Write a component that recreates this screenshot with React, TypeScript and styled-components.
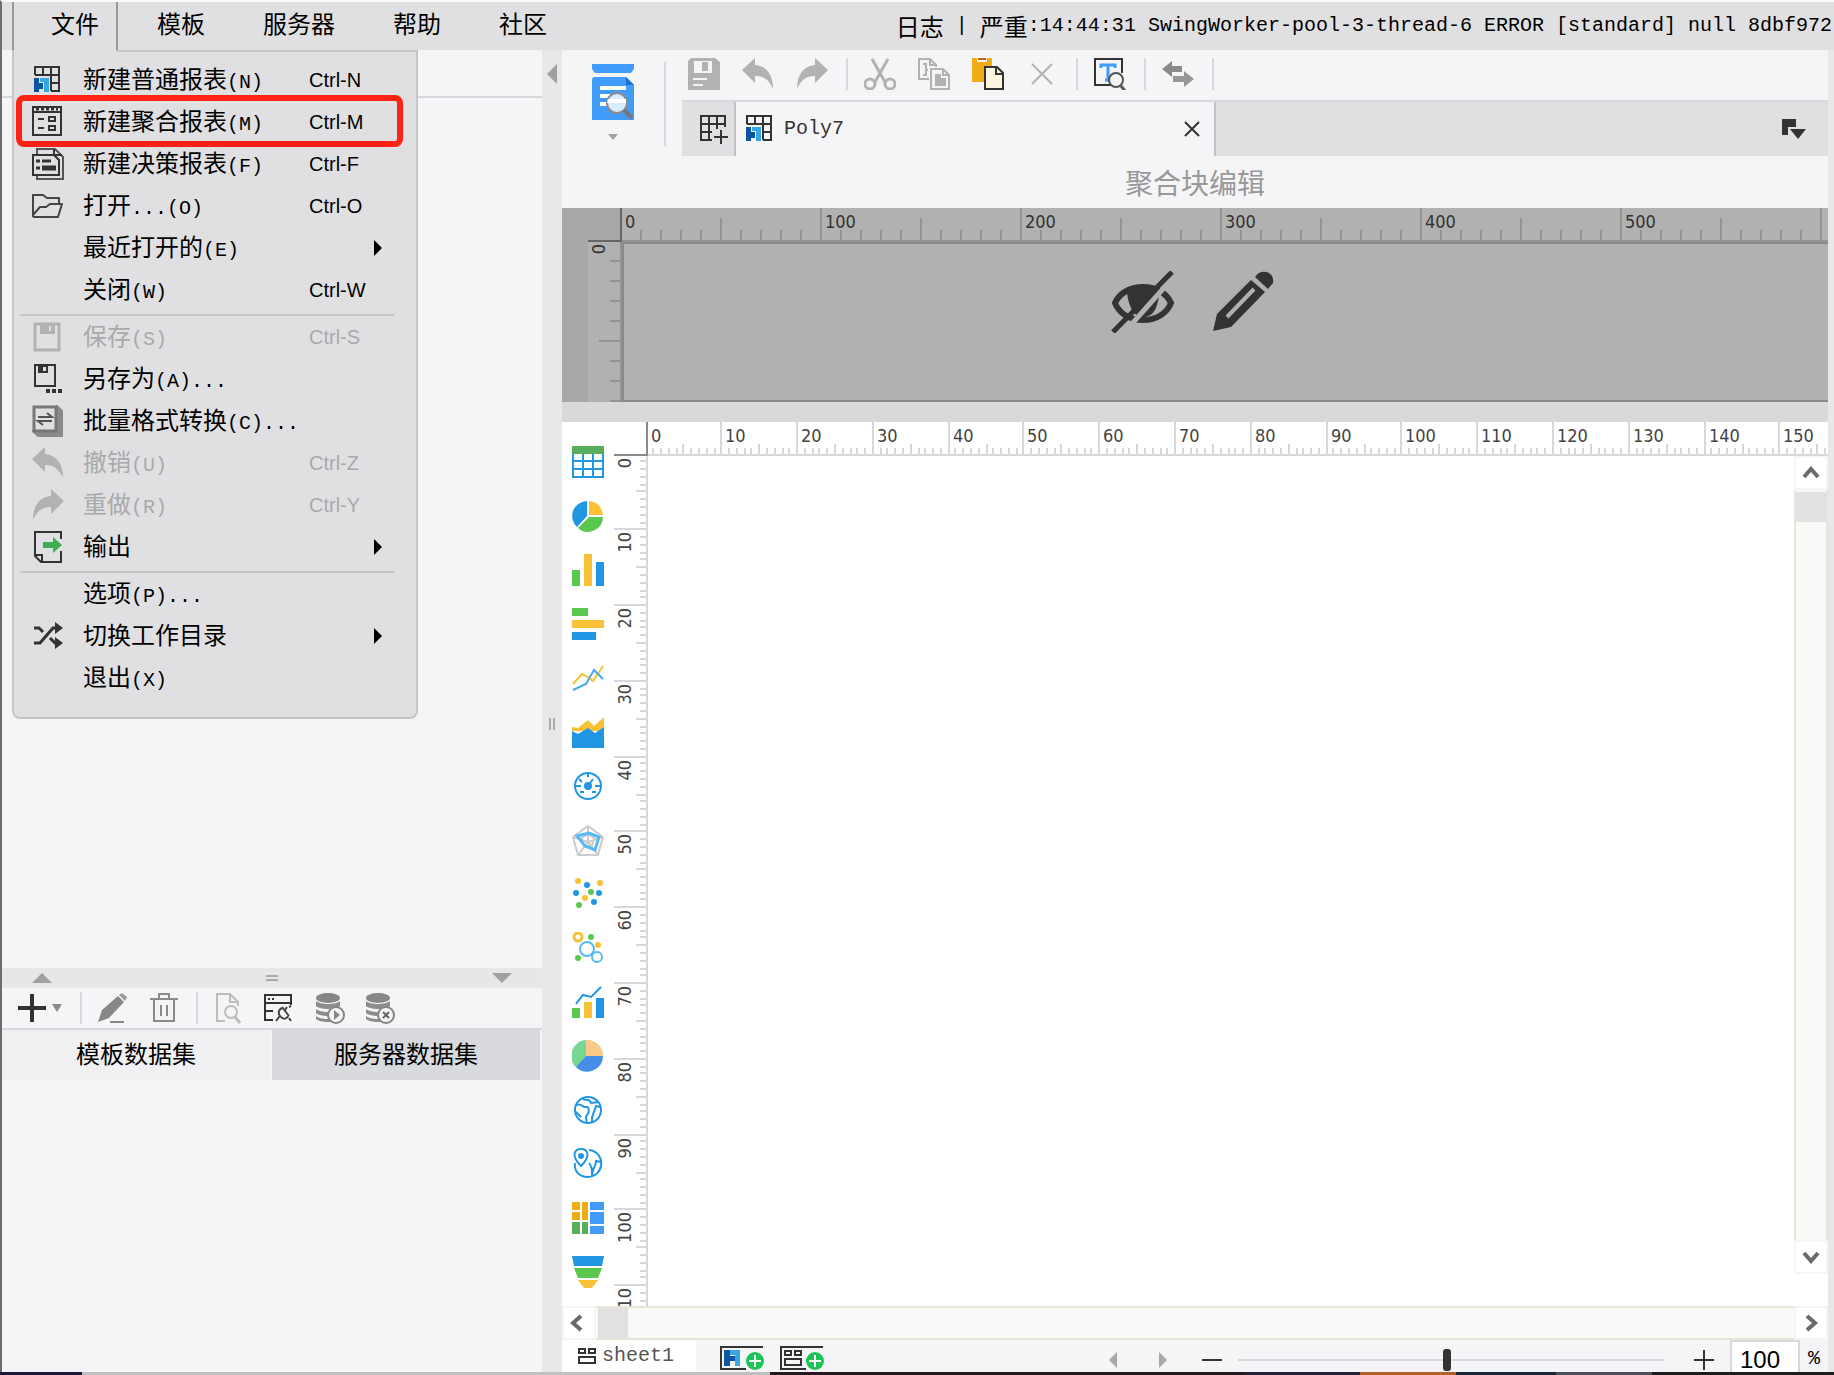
import React, { useLayoutEffect, useRef, useState } from "react";
import styled, { createGlobalStyle, css } from "styled-components";

const ink = "#333333";
const faded = "#b2b2b4";
const blue = "#2196e3";
const sky = "#55b9f5";
const amber = "#f9c136";
const green = "#58c84e";
const surface = "#f5f5f7";
const chrome = "#e0e0e2";
const rule = "#d8d8dc";

const Global = createGlobalStyle`
  *, *::before, *::after { box-sizing: border-box; }
  body { margin: 0; background: ${surface}; }
  button, input { font: inherit; color: inherit; }
  button { border: 0; padding: 0; background: none; text-align: left; }
  svg { display: block; flex: none; }
`;

/* ---------- text ---------- */

const Han = styled.span`
  font-family: "Noto Sans CJK SC", sans-serif;
  font-size: 24px;
`;

function Mixed({ text }: { text: string }) {
  const runs = text.match(/[\u4e00-\u9fff]+|[^\u4e00-\u9fff]+/g) || [];
  return (
    <>
      {runs.map((run, i) =>
        /[\u4e00-\u9fff]/.test(run) ? <Han key={i}>{run}</Han> : <React.Fragment key={i}>{run}</React.Fragment>
      )}
    </>
  );
}

/* ---------- icons ---------- */

type Draw = React.ReactNode;
function Icon({ w = 32, h = 32, children }: { w?: number; h?: number; children: Draw }) {
  return (
    <svg width={w} height={h} viewBox={`0 0 ${w} ${h}`} fill="none" aria-hidden="true">
      {children}
    </svg>
  );
}

const ReportGlyph = (
  <>
    <path d="M3 11V3h24v24h-8M3 11h24M11 3v8M19 3v24M19 19h8" stroke={ink} strokeWidth="2" />
    <path d="M2 14h5v5h4v6H7v3H2z" fill="#0b56a4" />
    <path d="M8 14h9v14h-5V18H8z" fill="#35a8e0" />
  </>
);
const PolyGlyph = (
  <>
    <path d="M1 1h28v28H1zM1 6h28" stroke={ink} strokeWidth="2" />
    <path d="M4 3h22" stroke={ink} strokeWidth="3" strokeDasharray="3 2" />
    <path d="M6 13h6M6 22h6M17 11h6v4h-6zM17 20h6v4h-6z" stroke={ink} strokeWidth="2" />
  </>
);
const FormGlyph = (
  <>
    <path d="M5 6V1h18l8 8v22H5v-3" stroke="#555" strokeWidth="2" />
    <path d="M1 7h21l5 5v15H1z" stroke={ink} strokeWidth="2" />
    <path d="M22 1v6h8" stroke={ink} strokeWidth="2" />
    <path d="M4 13h4M10 13h9M4 20h4" stroke={ink} strokeWidth="3" />
    <path d="M10 20h14" stroke={ink} strokeWidth="5" />
  </>
);
const FolderGlyph = (
  <path d="M1 27V5h10l4 3h12v6M1 27h25l4-13H18l-4 3H8L1 25" stroke="#444" strokeWidth="2" strokeLinejoin="round" />
);
const SaveGlyph = (
  <>
    <path d="M3 3h24v26H3z" stroke={faded} strokeWidth="3" />
    <path d="M8 3h15v10H8z" fill={faded} />
    <path d="M17 5h2v5h-2z" fill={chrome} />
  </>
);
const SaveAsGlyph = (
  <>
    <path d="M3 2h20v21H3z" stroke={ink} strokeWidth="2" />
    <path d="M6 2h10v8H6z" fill={ink} />
    <path d="M11 4h3v4h-3z" fill={chrome} />
    <path d="M14 28h4M20 28h4M26 28h4" stroke={ink} strokeWidth="4" />
  </>
);
const BatchGlyph = (
  <>
    <path d="m1 26 5 5h24V6l-5-5z" fill="#8a8a8c" stroke="#8a8a8c" strokeWidth="2" />
    <path d="M2 2h22v24H2z" stroke="#77777a" strokeWidth="3" fill={chrome} />
    <path d="M6 12h14l-5-4M20 16H6l5 4" stroke="#555" strokeWidth="2" />
  </>
);
const UndoShape = (c: string) => <path d="M0 12 13 0v7c12 1 18 10 18 24C27 22 22 18 13 18v7z" fill={c} />;
const RedoShape = (c: string) => <path d="M32 12 19 0v7C7 8 1 17 1 31c4-9 9-13 18-13v7z" fill={c} />;
const ExportGlyph = (
  <>
    <path d="M29 8V1H3v24l6 6h20V20M3 24h7v7" stroke={ink} strokeWidth="2" />
    <path d="M11 11h10V6l9 8-9 8v-5H11z" fill="#3fae52" />
  </>
);
const ShuffleGlyph = (
  <>
    <path d="M2 8h5l4 4M18 18l5 5h4M2 23h6L21 8h6" stroke={ink} strokeWidth="3" />
    <path d="M23 2l8 6-8 6zM23 17l8 6-8 6z" fill={ink} />
  </>
);

const magnifier = (cx: number, cy: number, r: number, c: string, fill = surface) => (
  <>
    <circle cx={cx} cy={cy} r={r} fill={fill} stroke={c} strokeWidth="2" />
    <path d={`M${cx + r - 2} ${cy + r - 1}l5 6`} stroke={c} strokeWidth="3" />
  </>
);

const EditGlyph = (
  <>
    <path d="M0 30 4 18 20 4l6 6-15 16z" fill="#878787" />
    <path d="m21 3 3-2 5 4-2 4z" fill="#9a9a9a" />
    <path d="M12 30h14" stroke="#878787" strokeWidth="2" />
  </>
);
const TrashGlyph = (
  <path d="M2 7h28M11 6V2h10v4M6 7v22h20V7M13 13v11M19 13v11" stroke="#8a8a8a" strokeWidth="2" />
);
const DocSearchGlyph = (
  <>
    <path d="M11 29H3V2h13l8 8v4M16 2v8h8" stroke="#bdbdbf" strokeWidth="2" />
    {magnifier(17, 20, 6, "#bdbdbf")}
  </>
);
const LinkWindowGlyph = (
  <>
    <path d="M9 28H1V3h26v10M1 11h26M1 19h8" stroke={ink} strokeWidth="2" />
    <path d="M4 7h2M8 7h2" stroke={ink} strokeWidth="2" />
    <path d="m12 29 4-5M16 24c-3-4 0-8 3-8M16 24c3 4 7 3 8 0M18 15l7 9M21 18l2-3M25 26l2 3M25 15l2-1" stroke="#444" strokeWidth="2" />
  </>
);
const Database = ({ cross }: { cross?: boolean }) => (
  <>
    <ellipse cx="14" cy="6" rx="12" ry="5" fill="#878787" />
    <path d="M2 9c4 4 20 4 24 0v5c-4 4-20 4-24 0zM2 17c4 4 20 4 24 0v4c-4 4-20 4-24 0zM2 24c4 4 20 4 24 0v3c-4 4-20 4-24 0z" fill="#8d8d8d" />
    <circle cx="22" cy="23" r="8" fill={surface} stroke="#878787" strokeWidth="2" />
    {cross ? <path d="m19 20 6 6m0-6-6 6" stroke="#666" strokeWidth="2" /> : <path d="m20 18 6 5-6 5z" fill="#878787" />}
  </>
);

const DiskGlyph = (
  <>
    <path d="M3 0h24l5 4v28H0V3z" fill={faded} />
    <path d="M6 3h18v12H6zM5 20h14v2H5zM5 26h10v2H5z" fill={surface} />
    <path d="M14 4h6v9h-6z" fill={faded} />
  </>
);
const CutGlyph = (
  <>
    <path d="M8 1 21 24M24 1 11 24" stroke={faded} strokeWidth="3" />
    <circle cx="6" cy="26" r="5" stroke={faded} strokeWidth="3" />
    <circle cx="26" cy="26" r="5" stroke={faded} strokeWidth="3" />
  </>
);
const CopyGlyph = (
  <>
    <path d="M11 21H1V1h11l6 6M12 1v6h6v2M5 6h3v11H5M8 12h2" stroke={faded} strokeWidth="2" />
    <path d="M13 11h12l6 6v14H13zM25 11v6h6" stroke={faded} strokeWidth="2" />
    <path d="M17 16h6v4h5v8H17z" fill={faded} />
  </>
);
const PasteGlyph = (
  <>
    <path d="M0 0h20v24H0z" fill="#f0ac14" />
    <path d="M5 0h10v4H5z" fill={surface} />
    <path d="M6 0h8v2H6z" fill="#c45f1e" />
    <path d="M13 9h12l6 6v16H13z" fill="#fdf5df" stroke={ink} strokeWidth="2" />
    <path d="M24 9v7h7" stroke={ink} strokeWidth="2" />
  </>
);
const FindTextGlyph = (
  <>
    <path d="M17 27H1V1h27v14" stroke={ink} strokeWidth="2" />
    <path d="M7 10V7h14v3M14 7v15M11 22h6" stroke="#419bf9" strokeWidth="3" />
    {magnifier(22, 22, 7, "#555")}
  </>
);
const SwapGlyph = (
  <>
    <path d="M0 11 10 3v5h10v6H10v5z" fill="#8a8a8a" />
    <path d="M32 21 22 13v5H11v6h11v5z" fill="#979797" />
  </>
);
const PreviewGlyph = (
  <>
    <path d="M0 0h42v5l-3 4H3L0 5z" fill="#419bf9" />
    <path d="M0 16q0-3 3-3h31l8 8v35H0z" fill="#419bf9" />
    <path d="M34 13v8h8z" fill="#1d6fc9" />
    <path d="M8 22h26v4H8zM8 30h10v4H8zM8 38h8v4H8z" fill="#fff" />
    <circle cx="25" cy="39" r="10" fill="#d9ebfe" stroke="#8c8c8c" strokeWidth="2" />
    <path d="M16 35h18v4H15z" fill="#fff" />
    <path d="m32 46 8 8" stroke="#777" strokeWidth="4" />
  </>
);
const AddTabGlyph = <path d="M26 14V3H2v24h11M2 11h24M2 19h11M10 3v24M18 3v13M22 17v14M15 24h14" stroke={ink} strokeWidth="2" />;

const EyeOffGlyph = (
  <>
    <path d="M4 32C8 23 18 16 32 16s24 7 28 16c-4 10-14 17-28 17S8 42 4 32z" stroke={ink} strokeWidth="6" />
    <path d="M16 22c10-7 24-7 33 0l-3 12c-3 10-9 12-14 12-8 0-14-8-16-24z" fill={ink} />
    <path d="M67 1 11 64" stroke="#b1b1b1" strokeWidth="5" />
    <path d="M61 1 2 61" stroke={ink} strokeWidth="5" />
  </>
);
const PencilGlyph = (
  <>
    <path d="M0 60 4 43 38 9l14 12-34 35z" fill={ink} />
    <path d="M14 46 41 18" stroke="#b1b1b1" strokeWidth="4" />
    <path d="M42 6c5-9 20-6 18 6l-5 6z" fill={ink} />
  </>
);

const Globe = (
  <>
    <circle cx="16" cy="16" r="13" stroke={blue} strokeWidth="2" />
    <path d="M4 11c6-2 7 3 10 2s4 5 1 8 1 5-1 8M10 4c3 4 8 0 9 5l8-1M20 28c-1-8 3-10 4-16l4 1M4 18l5 5" stroke={blue} strokeWidth="2" />
  </>
);

const chartTools: { name: string; draw: Draw }[] = [
  {
    name: "表格",
    draw: (
      <>
        <path d="M0 0h32v8H0z" fill="#5aad5c" />
        <path d="M1 8v23h30V8M0 15h32M0 23h32M11 8v23M21 8v23" stroke={blue} strokeWidth="2" />
      </>
    ),
  },
  {
    name: "饼图",
    draw: (
      <>
        <path d="M15 16V1A15 15 0 0 0 5 27z" fill={blue} />
        <path d="M17 15V1a15 15 0 0 1 14 14z" fill={amber} />
        <path d="M17 17h14A15 15 0 0 1 6 28z" fill={green} />
      </>
    ),
  },
  {
    name: "柱形图",
    draw: (
      <>
        <path d="M0 16h8v16H0z" fill={green} />
        <path d="M12 0h8v32h-8z" fill={amber} />
        <path d="M24 8h8v24h-8z" fill={blue} />
      </>
    ),
  },
  {
    name: "条形图",
    draw: (
      <>
        <path d="M0 0h16v8H0z" fill={green} />
        <path d="M0 12h32v8H0z" fill={amber} />
        <path d="M0 24h24v8H0z" fill={blue} />
      </>
    ),
  },
  {
    name: "折线图",
    draw: (
      <>
        <path d="M1 22 10 12l6 3 5 4L31 4" stroke={amber} strokeWidth="2" />
        <path d="m1 28 13-6L22 8l9 9" stroke="#4aa9ea" strokeWidth="2" />
      </>
    ),
  },
  {
    name: "面积图",
    draw: (
      <>
        <path d="m0 11 6 1 10-8 6 6L32 1v14H0z" fill={amber} />
        <path d="m0 15 6 3 10-6 7 5 9-6v21H0z" fill={blue} />
      </>
    ),
  },
  {
    name: "仪表盘",
    draw: (
      <>
        <circle cx="16" cy="16" r="13" stroke={blue} strokeWidth="2" />
        <circle cx="16" cy="16" r="4" fill={blue} />
        <path d="m16 16 5-7M3 16h6M23 16h6M16 3v4M7 9l3 3M8 22h4M20 22h4" stroke={blue} strokeWidth="2" />
      </>
    ),
  },
  {
    name: "雷达图",
    draw: (
      <>
        <path d="m16 2 15 11-5 18H6L1 13zM16 2v16M1 13l15 5 15-5M6 31l10-13 10 13M10 14l6-4 6 4-2 8h-8z" stroke="#cbcbcb" strokeWidth="2" />
        <path d="m5 12 12-3 10 4-4 13-10-4z" stroke={sky} strokeWidth="3" />
      </>
    ),
  },
  {
    name: "散点图",
    draw: (
      <>
        {[[6, 3, amber], [15, 7, blue], [28, 5, amber], [4, 15, blue], [19, 14, green], [27, 15, blue], [13, 20, amber], [22, 24, blue], [7, 27, green]].map(
          ([x, y, c], i) => (
            <circle key={i} cx={x} cy={y} r="3" fill={String(c)} />
          )
        )}
      </>
    ),
  },
  {
    name: "气泡图",
    draw: (
      <>
        <circle cx="6" cy="5" r="4" stroke={amber} strokeWidth="3" />
        <circle cx="15" cy="17" r="7" stroke={sky} strokeWidth="2" />
        <circle cx="25" cy="25" r="5" stroke={sky} strokeWidth="2" />
        <circle cx="19" cy="5" r="3" fill={green} />
        <circle cx="26" cy="13" r="3" fill={amber} />
        <circle cx="6" cy="26" r="3" fill={green} />
      </>
    ),
  },
  {
    name: "组合图",
    draw: (
      <>
        <path d="M0 22h8v10H0z" fill={green} />
        <path d="M12 16h8v16h-8z" fill={amber} />
        <path d="M24 12h8v20h-8z" fill={blue} />
        <path d="m4 18 7-9 8 2L29 1" stroke={blue} strokeWidth="2" />
      </>
    ),
  },
  {
    name: "自定义图表",
    draw: (
      <>
        <circle cx="15" cy="16" r="16" fill="#a9dcd0" />
        <path d="M14 16V0A16 16 0 0 0 4 27z" fill="#78d694" />
        <path d="M14 16V0a16 16 0 0 1 17 16z" fill="#fbca87" />
        <path d="M14 16h17A16 16 0 0 1 4 27z" fill="#468ee8" />
      </>
    ),
  },
  { name: "地图", draw: Globe },
  {
    name: "点地图",
    draw: (
      <>
        <path d="M17 2c17 2 16 26-1 27C6 29 2 22 3 15M17 15c4 5 3 9 3 13M20 28c0-8 4-9 4-15l5 1" stroke={blue} strokeWidth="2" />
        <path d="M9 18C-2 7 3 1 9 1s11 6 0 17z" fill="#fff" stroke={blue} strokeWidth="2" />
        <circle cx="9" cy="8" r="3" fill={blue} />
      </>
    ),
  },
  {
    name: "矩形树图",
    draw: (
      <>
        <path d="M0 0h8v8H0zM0 10h8v8H0zM10 0h6v18h-6z" fill="#f0ac14" />
        <path d="M0 20h8v12H0zM10 20h6v12h-6z" fill="#5aad5c" />
        <path d="M18 0h14v8H18zM18 10h14v12H18zM18 24h14v8H18z" fill="#419bf9" />
      </>
    ),
  },
  {
    name: "漏斗图",
    draw: (
      <>
        <path d="M0 0h32l-2 10H2z" fill={blue} />
        <path d="M2 12h28l-4 10H6z" fill={green} />
        <path d="M6 24h20l-6 8h-8z" fill={amber} />
      </>
    ),
  },
];

/* ---------- menu bar ---------- */

const Page = styled.div`
  display: flex;
  flex-direction: column;
  height: 100vh;
  min-height: 900px;
  overflow: hidden;
  color: #000;
  background: ${surface};
  font-family: "Liberation Mono", "Noto Sans CJK SC", monospace;
  font-size: 20px;
  line-height: 24px;
`;

const Window = styled.div`
  display: flex;
  flex: 1;
  flex-direction: column;
  min-height: 0;
  border-top: 2px solid #fcfcfc;
  border-left: 2px solid #6d6d70;
`;

const MenuBar = styled.header`
  display: flex;
  justify-content: space-between;
  height: 48px;
  padding: 0 2px 0 10px;
  background: ${chrome};
`;

const Menus = styled.nav`
  display: flex;
`;

const MenuHolder = styled.div<{ $open?: boolean }>`
  position: relative;
  display: flex;
  border: 0 solid ${(p) => (p.$open ? "#98989b" : "transparent")};
  border-width: 0 2px;
`;

const MenuButton = styled.button`
  padding: 0 17px 2px 37px;
  white-space: nowrap;
`;

const LogLine = styled.div`
  display: flex;
  align-items: center;
  white-space: pre;
`;

const Popup = styled.div`
  position: absolute;
  z-index: 5;
  top: 100%;
  left: -2px;
  width: 406px;
  padding: 7px 0 18px;
  border: 2px solid #c6c6c8;
  border-radius: 0 0 8px 8px;
  background: ${chrome};

  &::before {
    content: "";
    position: absolute;
    top: -2px;
    left: 0;
    width: 102px;
    height: 2px;
    background: ${chrome};
  }
`;

const Entry = styled.button<{ $marked?: boolean }>`
  position: relative;
  display: grid;
  grid-template-columns: 51px 226px 65px 8px;
  align-items: center;
  width: 100%;
  height: 42px;
  padding-left: 18px;
  white-space: nowrap;

  &:disabled {
    color: #a9a9ab;
  }

  ${(p) =>
    p.$marked &&
    css`
      &::after {
        content: "";
        position: absolute;
        inset: -6px 13px -4px 2px;
        border: 6px solid #ff2413;
        border-radius: 8px;
      }
    `}
`;

const Shortcut = styled.kbd`
  font-family: "Liberation Sans", sans-serif;
  font-size: 20px;
`;

const Divider = styled.hr`
  height: 2px;
  margin: 3px 22px 0 6px;
  border: 0;
  background: #c6c6c8;
`;

type Item = { label: string; keys?: string; icon?: Draw; off?: boolean; sub?: boolean; marked?: boolean };
const fileMenu: Item[][] = [
  [
    { label: "新建普通报表(N)", keys: "Ctrl-N", icon: ReportGlyph },
    { label: "新建聚合报表(M)", keys: "Ctrl-M", icon: PolyGlyph, marked: true },
    { label: "新建决策报表(F)", keys: "Ctrl-F", icon: FormGlyph },
    { label: "打开...(O)", keys: "Ctrl-O", icon: FolderGlyph },
    { label: "最近打开的(E)", sub: true },
    { label: "关闭(W)", keys: "Ctrl-W" },
  ],
  [
    { label: "保存(S)", keys: "Ctrl-S", icon: SaveGlyph, off: true },
    { label: "另存为(A)...", icon: SaveAsGlyph },
    { label: "批量格式转换(C)...", icon: BatchGlyph },
    { label: "撤销(U)", keys: "Ctrl-Z", icon: UndoShape(faded), off: true },
    { label: "重做(R)", keys: "Ctrl-Y", icon: RedoShape(faded), off: true },
    { label: "输出", icon: ExportGlyph, sub: true },
  ],
  [{ label: "选项(P)..." }, { label: "切换工作目录", icon: ShuffleGlyph, sub: true }, { label: "退出(X)" }],
];

function FileMenu() {
  return (
    <Popup role="menu" aria-label="文件">
      {fileMenu.map((group, g) => (
        <React.Fragment key={g}>
          {g > 0 && <Divider />}
          {group.map((item) => (
            <Entry key={item.label} role="menuitem" disabled={item.off} $marked={item.marked}>
              <Icon>{item.icon}</Icon>
              <span>
                <Mixed text={item.label} />
              </span>
              <Shortcut>{item.keys}</Shortcut>
              {item.sub && (
                <Icon w={8} h={16}>
                  <path d="M0 0l8 8-8 8z" fill="#000" />
                </Icon>
              )}
            </Entry>
          ))}
        </React.Fragment>
      ))}
    </Popup>
  );
}

/* ---------- left side ---------- */

const Body = styled.div`
  display: flex;
  flex: 1;
  min-height: 0;
`;

const Side = styled.aside`
  display: flex;
  flex: 0 0 540px;
  flex-direction: column;
  background: ${surface};
`;

const TreeHead = styled.div`
  height: 48px;
  border-bottom: 2px solid ${rule};
`;

const TreeBody = styled.div`
  flex: 1;
`;

const SplitRow = styled.div`
  display: flex;
  align-items: center;
  justify-content: space-between;
  height: 20px;
  padding: 0 30px;
  background: #e7e7e7;
`;

const DataPane = styled.section`
  height: 384px;
`;

const DataTools = styled.div`
  display: flex;
  align-items: center;
  height: 42px;
  padding: 0 14px;
  border-bottom: 2px solid ${rule};
`;

const DataGroup = styled.div`
  display: flex;
  align-items: center;
  gap: 18px;
  height: 32px;

  & + & {
    margin-left: 16px;
    padding-left: 16px;
    border-left: 2px solid ${rule};
  }
`;

const AddButton = styled.button`
  display: flex;
  align-items: center;
  gap: 4px;
`;

const DataTabs = styled.div`
  display: grid;
  grid-template-columns: 1fr 1fr;
  gap: 2px;
  padding-right: 2px;
`;

const DataTab = styled.button<{ $active?: boolean }>`
  height: 50px;
  text-align: center;
  background: ${(p) => (p.$active ? "#f0f0f2" : "#d9dade")};
`;

const SplitColumn = styled.div`
  display: flex;
  flex: 0 0 20px;
  flex-direction: column;
  align-items: center;
  justify-content: space-between;
  padding: 14px 0 0;
  background: #e8e8e8;

  &::after {
    content: "";
    height: 8px;
  }
`;

/* ---------- right side ---------- */

const Main = styled.main`
  display: flex;
  flex: 1;
  flex-direction: column;
  min-width: 0;
  border-right: 6px solid #e8e8e8;
`;

const TopArea = styled.div`
  display: flex;
  height: 106px;
`;

const PreviewBox = styled.button`
  display: flex;
  flex-direction: column;
  align-items: center;
  gap: 14px;
  height: 84px;
  margin: 12px 16px 0 0;
  padding: 2px 30px 0;
  border-right: 2px solid ${rule};
`;

const TopRight = styled.div`
  display: flex;
  flex: 1;
  flex-direction: column;
  min-width: 0;
`;

const Tools = styled.div`
  display: flex;
  padding: 8px 0 10px;
  margin-left: -10px;
`;

const ToolGroup = styled.div`
  display: flex;
  gap: 22px;
  height: 32px;
  padding: 0 18px 0 16px;
  border-right: 2px solid ${rule};
`;

const TabStrip = styled.div`
  display: flex;
  align-items: center;
  height: 56px;
  border-top: 2px solid ${rule};
  background: ${chrome};
`;

const NewTab = styled.button`
  width: 54px;
  height: 54px;
  padding-left: 17px;
  border-right: 2px solid #c2c2c6;
`;

const DocTab = styled.div`
  display: flex;
  flex: 0 0 480px;
  align-items: center;
  gap: 8px;
  height: 54px;
  padding: 0 14px 0 8px;
  border-right: 2px solid #c2c2c6;
  background: ${surface};
  color: ${ink};

  & > span {
    flex: 1;
  }
`;

const TabList = styled.button`
  margin: 0 22px 0 auto;
`;

const BlockTitle = styled.h1`
  margin: 0;
  height: 52px;
  font: 400 28px/52px "Noto Sans CJK SC", sans-serif;
  text-align: center;
  color: #999;
`;

const BlockPanel = styled.section`
  position: relative;
  display: grid;
  grid-template-columns: 26px 34px 1fr;
  grid-template-rows: 34px 1fr;
  height: 194px;
  background: #b1b1b1;
`;

const Gutter = styled.div`
  grid-row: 1 / 3;
  background: #a8a8a8;
`;

const Corner = styled.div<{ $bg: string; $line: string }>`
  border: solid ${(p) => p.$line};
  border-width: 0 2px 2px 0;
  background: ${(p) => p.$bg};
`;

const RulerBox = styled.div`
  position: relative;
  min-width: 0;
  min-height: 0;
  overflow: hidden;

  & > svg {
    position: absolute;
    inset: 0;
  }
`;

const BlockCanvas = styled.div`
  border: 2px solid #8a8a8a;
  border-right: 0;
`;

const BlockActions = styled.div`
  position: absolute;
  inset: 0;
  display: flex;
  align-items: center;
  justify-content: center;
  gap: 38px;
  padding: 0 4px 6px 0;
`;

const Gap = styled.div`
  height: 20px;
  background: #d9d9db;
`;

const Sheet = styled.section`
  display: flex;
  flex: 1;
  min-height: 0;
  background: #fff;
`;

const ChartColumn = styled.div`
  display: flex;
  flex: 0 0 52px;
  flex-direction: column;
  align-items: flex-start;
  gap: 22px;
  padding: 24px 0 0 10px;
`;

const SheetGrid = styled.div`
  display: grid;
  flex: 1;
  grid-template-columns: 34px 1fr 34px;
  grid-template-rows: 34px 1fr;
  min-width: 0;
`;

const TopRuler = styled(RulerBox)`
  grid-column: 2 / 4;
`;

const VScroll = styled.div`
  display: flex;
  flex-direction: column;
  margin-bottom: 32px;
`;

const Track = styled.div<{ $row?: boolean }>`
  flex: 1;
  padding: ${(p) => (p.$row ? "0 0 0 2px" : "2px 0 0")};
  background: #f9f9f7;
  border: solid #e8e4d8;
  border-width: ${(p) => (p.$row ? "2px 0" : "0 2px")};
`;

const Thumb = styled.div`
  width: 30px;
  height: 30px;
  background: #e1e1e1;
`;

const ScrollButton = styled.button`
  display: flex;
  flex: 0 0 34px;
  align-items: center;
  justify-content: center;
  border: 2px solid ${surface};
  background: #fff;
`;

const HScroll = styled.div`
  display: flex;
  height: 34px;
`;

const SheetBar = styled.footer`
  display: flex;
  align-items: stretch;
  height: 32px;
`;

const SheetTab = styled.button`
  display: flex;
  align-items: center;
  gap: 6px;
  width: 134px;
  margin-right: 24px;
  padding-left: 16px;
  background: #fff;
  color: #555;
`;

const AddSheets = styled.div`
  display: flex;
  align-items: center;
  gap: 16px;
  padding-top: 4px;
`;

const ZoomBar = styled.div`
  display: flex;
  align-items: center;
  margin-left: auto;
  padding-top: 8px;
`;

const Pager = styled.div`
  display: flex;
  gap: 42px;
  margin-right: 35px;
`;

const ZoomRange = styled.input`
  width: 426px;
  height: 24px;
  margin: 0 30px 0 16px;
  appearance: none;
  background: linear-gradient(${rule}, ${rule}) center / 100% 2px no-repeat;

  &::-webkit-slider-thumb {
    appearance: none;
    width: 8px;
    height: 22px;
    border-radius: 3px;
    background: ${ink};
  }
`;

const ZoomField = styled.label`
  display: flex;
  align-items: center;
  gap: 8px;
  width: 98px;
  margin-left: 16px;
`;

const Percent = styled.span`
  padding-top: 6px;
`;

const ZoomInput = styled.input`
  width: 70px;
  height: 32px;
  padding: 6px 0 0 8px;
  border: 2px solid ${rule};
  border-bottom: 0;
  background: #fff;
  font-family: "Liberation Sans", sans-serif;
  font-size: 24px;
`;

const Taskbar = styled.div`
  display: flex;
  height: 3px;
`;

const Strip = styled.div<{ $grow: number; $color: string }>`
  flex: ${(p) => p.$grow} 1 0;
  background: ${(p) => p.$color};
`;

/* ---------- rulers ---------- */

type RulerProps = {
  vertical?: boolean;
  unit: number;
  step: number;
  tick: string;
  text: string;
  minor: number;
  middle: number;
};

// Ticks sit on a two-pixel grid; every tenth one is long and carries a label.
function Ruler({ vertical, unit, step, tick, text, minor, middle }: RulerProps) {
  const ref = useRef<SVGSVGElement>(null);
  const [length, setLength] = useState(1000);
  useLayoutEffect(() => {
    const box = ref.current!.parentElement!;
    const measure = () => setLength(vertical ? box.clientHeight : box.clientWidth);
    measure();
    const watcher = new ResizeObserver(measure);
    watcher.observe(box);
    return () => watcher.disconnect();
  }, [vertical]);

  let d = "";
  const labels: { at: number; value: number }[] = [{ at: -2, value: 0 }];
  for (let i = 1; ; i++) {
    const at = 2 * Math.floor(i * unit) - 2;
    if (at > length) break;
    const from = i % 10 === 0 ? 0 : i % 5 === 0 ? middle : minor;
    d += vertical ? `M${from} ${at + 1}H32` : `M${at + 1} ${from}V32`;
    if (i % 10 === 0 && at + 8 < length) labels.push({ at, value: i * step });
  }
  return (
    <svg ref={ref} width="100%" height="100%" aria-hidden="true">
      <path d={d} stroke={tick} strokeWidth="2" />
      <path d={vertical ? `M33 0V${length}` : `M0 33H${length}`} stroke={tick} strokeWidth="2" />
      <g fill={text} fontFamily='"DejaVu Sans Condensed", "DejaVu Sans", sans-serif' fontSize="18" fontStretch="condensed">
        {labels.map(({ at, value }) =>
          vertical ? (
            <text key={value} transform={`translate(17 ${at + 4}) rotate(-90)`} textAnchor="end">
              {value}
            </text>
          ) : (
            <text key={value} x={at + 5} y="20">
              {value}
            </text>
          )
        )}
      </g>
    </svg>
  );
}

const Triangle = ({ d, w, h, c = "#a0a0a0" }: { d: string; w: number; h: number; c?: string }) => (
  <Icon w={w} h={h}>
    <path d={d} fill={c} />
  </Icon>
);

const Chevron = ({ d, w = 18, h = 14 }: { d: string; w?: number; h?: number }) => (
  <Icon w={w} h={h}>
    <path d={d} stroke="#6a6a6a" strokeWidth="4" />
  </Icon>
);

const Tool = ({ name, draw, w, h, off }: { name: string; draw: Draw; w?: number; h?: number; off?: boolean }) => (
  <button aria-label={name} disabled={off}>
    <Icon w={w} h={h}>
      {draw}
    </Icon>
  </button>
);

const SheetBoxes = <path d="M1 1h6v4H1zM11 1h6v4h-6zM1 9h16v6H1z" stroke={ink} strokeWidth="2" />;
const PlusBadge = (
  <>
    <circle cx="35" cy="15" r="9" fill="#1cc456" />
    <path d="M35 9v12M29 15h12" stroke="#fff" strokeWidth="2" />
  </>
);

const tasks: [number, string][] = [
  [82, "#1c1638"],
  [688, "#c0c0c0"],
  [475, "#241a20"],
  [115, "#221f38"],
  [96, "#b0622c"],
  [100, "#1b2538"],
  [96, "#4b4d58"],
  [182, "#1e1c1f"],
];

export default function App() {
  return (
    <Page>
      <Global />
      <Window>
        <MenuBar>
          <Menus>
            {["文件", "模板", "服务器", "帮助", "社区"].map((name, i) => (
              <MenuHolder key={name} $open={i === 0}>
                <MenuButton>
                  <Mixed text={name} />
                </MenuButton>
                {i === 0 && <FileMenu />}
              </MenuHolder>
            ))}
          </Menus>
          <LogLine>
            <Mixed text="日志 | 严重:14:44:31 SwingWorker-pool-3-thread-6 ERROR [standard] null 8dbf972" />
          </LogLine>
        </MenuBar>

        <Body>
          <Side>
            <TreeHead />
            <TreeBody />
            <SplitRow>
              <Triangle w={20} h={10} d="M10 0l10 10H0z" />
              <Icon w={12} h={6}>
                <path d="M0 1h12M0 5h12" stroke="#aaa" strokeWidth="2" />
              </Icon>
              <Triangle w={20} h={10} d="M0 0h20L10 10z" />
            </SplitRow>
            <DataPane>
              <DataTools>
                <DataGroup>
                  <AddButton aria-label="新建数据集">
                    <Icon>
                      <path d="M16 2v28M2 16h28" stroke={ink} strokeWidth="4" />
                    </Icon>
                    <Triangle w={12} h={8} d="M0 0h10L5 8z" c="#8a8a8a" />
                  </AddButton>
                </DataGroup>
                <DataGroup>
                  <Tool name="编辑" draw={EditGlyph} />
                  <Tool name="删除" draw={TrashGlyph} />
                </DataGroup>
                <DataGroup>
                  <Tool name="预览数据" draw={DocSearchGlyph} />
                  <Tool name="连接" draw={LinkWindowGlyph} />
                  <Tool name="启用缓存" draw={<Database />} />
                  <Tool name="清除缓存" draw={<Database cross />} />
                </DataGroup>
              </DataTools>
              <DataTabs role="tablist">
                <DataTab role="tab" $active>
                  <Mixed text="模板数据集" />
                </DataTab>
                <DataTab role="tab">
                  <Mixed text="服务器数据集" />
                </DataTab>
              </DataTabs>
            </DataPane>
          </Side>

          <SplitColumn>
            <Triangle w={10} h={20} d="M10 0v20L0 10z" />
            <Icon w={6} h={12}>
              <path d="M1 0v12M5 0v12" stroke="#aaa" strokeWidth="2" />
            </Icon>
          </SplitColumn>

          <Main>
            <TopArea>
              <PreviewBox aria-label="预览">
                <Icon w={42} h={56}>
                  {PreviewGlyph}
                </Icon>
                <Triangle w={10} h={6} d="M0 0h10L5 6z" />
              </PreviewBox>
              <TopRight>
                <Tools>
                  <ToolGroup>
                    <Tool name="保存" draw={DiskGlyph} off />
                    <Tool name="撤销" draw={UndoShape(faded)} off />
                    <Tool name="重做" draw={RedoShape(faded)} off />
                  </ToolGroup>
                  <ToolGroup>
                    <Tool name="剪切" draw={CutGlyph} off />
                    <Tool name="复制" draw={CopyGlyph} off />
                    <Tool name="粘贴" draw={PasteGlyph} />
                    <Tool name="删除" draw={<path d="m6 6 20 20M26 6 6 26" stroke={faded} strokeWidth="2" />} off />
                  </ToolGroup>
                  <ToolGroup>
                    <Tool name="查找" draw={FindTextGlyph} />
                  </ToolGroup>
                  <ToolGroup>
                    <Tool name="替换" draw={SwapGlyph} />
                  </ToolGroup>
                </Tools>
                <TabStrip>
                  <NewTab aria-label="新建模板">
                    <Icon>{AddTabGlyph}</Icon>
                  </NewTab>
                  <DocTab>
                    <Icon>{ReportGlyph}</Icon>
                    <span>Poly7</span>
                    <Tool name="关闭" w={16} h={16} draw={<path d="m1 1 14 14M15 1 1 15" stroke={ink} strokeWidth="2" />} />
                  </DocTab>
                  <TabList aria-label="模板列表">
                    <Icon w={24} h={20}>
                      <path d="M0 0h14v8H6v8H0z" fill={ink} />
                      <path d="M8 10h16l-8 10z" fill={ink} />
                    </Icon>
                  </TabList>
                </TabStrip>
              </TopRight>
            </TopArea>
            <BlockTitle>聚合块编辑</BlockTitle>

            <BlockPanel>
              <Gutter />
              <Corner $bg="#a8a8a8" $line="#666" />
              <RulerBox>
                <Ruler unit={10} step={10} tick="#939393" text={ink} minor={22} middle={10} />
              </RulerBox>
              <RulerBox>
                <Ruler vertical unit={10} step={10} tick="#939393" text={ink} minor={22} middle={11} />
              </RulerBox>
              <BlockCanvas />
              <BlockActions>
                <Tool name="隐藏" draw={EyeOffGlyph} w={64} h={62} />
                <Tool name="编辑块" draw={PencilGlyph} w={62} h={62} />
              </BlockActions>
            </BlockPanel>
            <Gap />

            <Sheet>
              <ChartColumn>
                {chartTools.map((t) => (
                  <Tool key={t.name} name={t.name} draw={t.draw} />
                ))}
              </ChartColumn>
              <SheetGrid>
                <Corner $bg="#fff" $line="#8a8a8a" />
                <TopRuler>
                  <Ruler unit={3.7795} step={1} tick={rule} text="#444" minor={26} middle={22} />
                </TopRuler>
                <RulerBox>
                  <Ruler vertical unit={3.7795} step={1} tick={rule} text="#444" minor={26} middle={22} />
                </RulerBox>
                <div />
                <VScroll>
                  <ScrollButton aria-label="向上">
                    <Chevron d="m2 11 7-8 7 8" />
                  </ScrollButton>
                  <Track>
                    <Thumb />
                  </Track>
                  <ScrollButton aria-label="向下">
                    <Chevron d="m2 3 7 8 7-8" />
                  </ScrollButton>
                </VScroll>
              </SheetGrid>
            </Sheet>
            <HScroll>
              <ScrollButton aria-label="向左">
                <Chevron w={18} h={18} d="m11 2-8 7 8 7" />
              </ScrollButton>
              <Track $row>
                <Thumb />
              </Track>
              <ScrollButton aria-label="向右">
                <Chevron w={18} h={18} d="m5 2 8 7-8 7" />
              </ScrollButton>
            </HScroll>
            <SheetBar>
              <SheetTab>
                <Icon w={18} h={16}>
                  {SheetBoxes}
                </Icon>
                sheet1
              </SheetTab>
              <AddSheets>
                <Tool
                  name="添加报表块"
                  w={44}
                  h={24}
                  draw={
                    <>
                      <path d="M43 1H1v22h25" stroke={ink} strokeWidth="2" />
                      <path d="M4 4h6v6h5v5h-5v5H4z" fill="#0b56a4" />
                      <path d="M10 4h10v16h-5V9h-5z" fill="#35a8e0" />
                      {PlusBadge}
                    </>
                  }
                />
                <Tool
                  name="添加聚合块"
                  w={44}
                  h={24}
                  draw={
                    <>
                      <path d="M43 1H1v22h25" stroke={ink} strokeWidth="2" />
                      <g transform="translate(4 4)">{SheetBoxes}</g>
                      {PlusBadge}
                    </>
                  }
                />
              </AddSheets>
              <ZoomBar>
                <Pager>
                  <Tool name="上一页" w={8} h={16} draw={<path d="M8 0v16L0 8z" fill="#a8a8a8" />} />
                  <Tool name="下一页" w={8} h={16} draw={<path d="M0 0v16l8-8z" fill="#a8a8a8" />} />
                </Pager>
                <Tool name="缩小" w={20} h={20} draw={<path d="M0 10h20" stroke={ink} strokeWidth="2" />} />
                <ZoomRange type="range" min={0} max={100} defaultValue={49} aria-label="缩放" />
                <Tool name="放大" w={20} h={20} draw={<path d="M0 10h20M10 0v20" stroke={ink} strokeWidth="2" />} />
              </ZoomBar>
              <ZoomField>
                <ZoomInput defaultValue="100" aria-label="缩放比例" />
                <Percent>%</Percent>
              </ZoomField>
            </SheetBar>
          </Main>
        </Body>
      </Window>
      <Taskbar>
        {tasks.map(([grow, color], i) => (
          <Strip key={i} $grow={grow} $color={color} />
        ))}
      </Taskbar>
    </Page>
  );
}
